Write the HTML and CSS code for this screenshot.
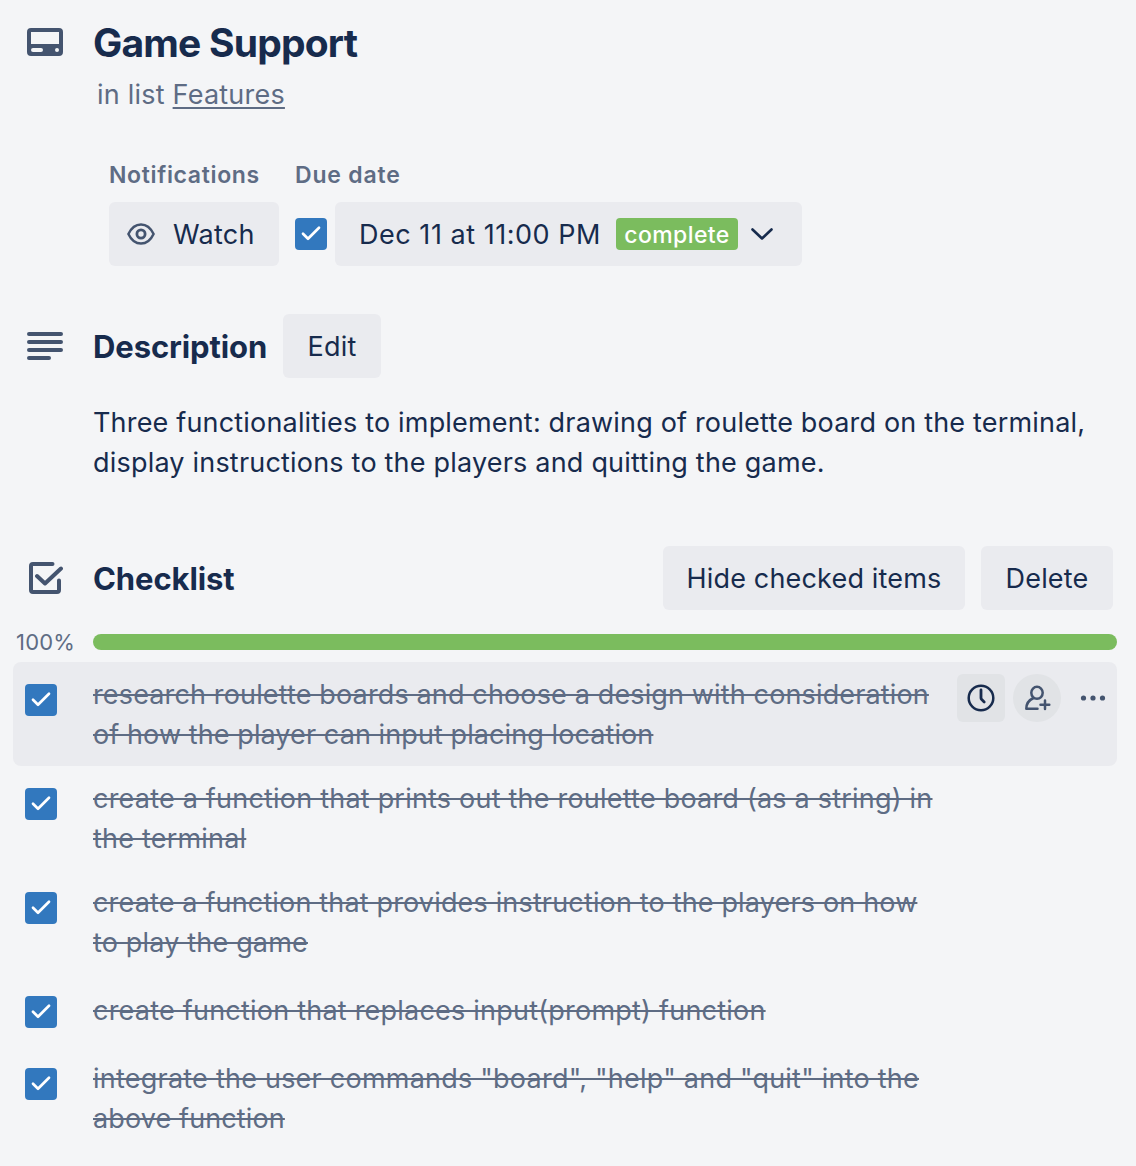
FILE: index.html
```html
<!DOCTYPE html>
<html lang="en">
<head>
<meta charset="utf-8">
<title>Game Support</title>
<link rel="stylesheet" href="styles.css">
</head>
<body>
<svg class="defs" aria-hidden="true">
  <symbol id="tick" viewBox="0 0 32 32"><path d="M8 15.800l5 5L24 9.800" fill="none" stroke="#fff" stroke-width="2.700" stroke-linecap="round" stroke-linejoin="round"/></symbol>
</svg>
<main class="card">
  <header class="head">
    <svg class="icon icon-card" width="36" height="28" viewBox="0 0 36 28"><path fill="#44546f" fill-rule="evenodd" d="M4 0h28a4 4 0 0 1 4 4v20a4 4 0 0 1-4 4H4a4 4 0 0 1-4-4V4a4 4 0 0 1 4-4zM4 4v12h28V4zM6 20a2 2 0 0 0 0 4h8a2 2 0 0 0 0-4zM30 20a2 2 0 1 0 0 4 2 2 0 0 0 0-4z"/></svg>
    <div>
      <h1 class="title">Game Support</h1>
      <p class="sub">in list <a class="link">Features</a></p>
    </div>
  </header>

  <section class="meta">
    <div>
      <h3 class="label label-notif">Notifications</h3>
      <button class="btn watch"><svg width="28" height="24" viewBox="0 0 28 24" fill="none" stroke="#44546f"><path d="M1.400 12C4 6.500 8.500 2.400 14 2.400S24 6.500 26.600 12C24 17.500 19.500 21.600 14 21.600S4 17.500 1.400 12z" stroke-width="2.500" stroke-linejoin="round"/><circle cx="14" cy="12" r="4.100" stroke-width="2.800"/></svg><span class="t-watch">Watch</span></button>
    </div>
    <div>
      <h3 class="label label-due">Due date</h3>
      <div class="due">
        <span class="check"><svg width="32" height="32"><use href="#tick"/></svg></span>
        <button class="btn date"><span class="t-date">Dec 11 at 11:00 PM</span><span class="badge">complete</span><svg width="24" height="14" viewBox="0 0 24 14"><path d="M2.500 2.500L12 11.500l9.500-9" fill="none" stroke="#172b4d" stroke-width="2.600" stroke-linecap="round" stroke-linejoin="round"/></svg></button>
      </div>
    </div>
  </section>

  <section class="description">
    <div class="bar">
      <svg class="icon" width="36" height="28" viewBox="0 0 36 28" stroke="#44546f" stroke-width="4" stroke-linecap="round"><path d="M2 2h32M2 10h32M2 18h32M2 26h20"/></svg>
      <h2 class="h2 h2-desc">Description</h2>
      <button class="btn edit"><span>Edit</span></button>
    </div>
    <p class="text"><span class="d1">Three functionalities to implement: drawing of roulette board on the terminal,</span><br><span class="d2">display instructions to the players and quitting the game.</span></p>
  </section>

  <section class="checklist">
    <div class="bar">
      <svg class="icon" width="36" height="32" viewBox="0 0 36 32" fill="none" stroke="#44546f" stroke-width="4" stroke-linecap="round" stroke-linejoin="round"><path d="M25.500 2H6a2 2 0 0 0-2 2v24a2 2 0 0 0 2 2h24a2 2 0 0 0 2-2V18.500M10 14l8 7.500L34 6.500"/></svg>
      <h2 class="h2 h2-check">Checklist</h2>
      <div class="actions">
        <button class="btn hide"><span>Hide checked items</span></button>
        <button class="btn delete"><span>Delete</span></button>
      </div>
    </div>
    <div class="progress"><span class="percent">100%</span><div class="track"></div></div>
    <ul class="items">
      <li class="item active">
        <span class="check"><svg width="32" height="32"><use href="#tick"/></svg></span>
        <p class="name"><span class="a1">research roulette boards and choose a design with consideration</span><br><span class="a2">of how the player can input placing location</span></p>
        <div class="tools">
          <span class="tool"><svg width="28" height="28" viewBox="0 0 28 28" fill="none" stroke="#172b4d" stroke-linecap="round" stroke-linejoin="round"><circle cx="14" cy="14" r="12.300" stroke-width="2.500"/><path d="M14 6v8q0 .8.500 1.300l2.700 2.700" stroke-width="2.800"/></svg></span>
          <span class="tool round"><svg width="28" height="28" viewBox="0 0 28 28" fill="none" stroke="#44546f" stroke-width="2.500" stroke-linecap="round" stroke-linejoin="round"><ellipse cx="14" cy="8.800" rx="5.700" ry="6"/><path d="M10.500 14C6 16 3.300 19.500 3.300 24.800H14.500M22 16.500v8.600M17.500 20.800h8.800"/></svg></span>
          <span class="tool plain"><svg width="26" height="6" viewBox="0 0 26 6" fill="#44546f"><circle cx="3.500" cy="3" r="2.600"/><circle cx="13" cy="3" r="2.600"/><circle cx="22.500" cy="3" r="2.600"/></svg></span>
        </div>
      </li>
      <li class="item">
        <span class="check"><svg width="32" height="32"><use href="#tick"/></svg></span>
        <p class="name"><span class="b1">create a function that prints out the roulette board (as a string) in</span><br><span class="b2">the terminal</span></p>
      </li>
      <li class="item">
        <span class="check"><svg width="32" height="32"><use href="#tick"/></svg></span>
        <p class="name"><span class="c1">create a function that provides instruction to the players on how</span><br><span class="c2">to play the game</span></p>
      </li>
      <li class="item single">
        <span class="check"><svg width="32" height="32"><use href="#tick"/></svg></span>
        <p class="name"><span class="e1">create function that replaces input(prompt) function</span></p>
      </li>
      <li class="item">
        <span class="check"><svg width="32" height="32"><use href="#tick"/></svg></span>
        <p class="name"><span class="f1">integrate the user commands "board", "help" and "quit" into the</span><br><span class="f2">above function</span></p>
      </li>
    </ul>
  </section>
</main>
</body>
</html>
```
FILE: styles.css
```css
* { box-sizing: border-box; margin: 0; padding: 0; }
body {
  background: #f4f5f7;
  color: #172b4d;
  font: 27px/40px Inter, "Liberation Sans", sans-serif;
  white-space: nowrap;
}
.defs { display: none; }
svg { display: block; flex: none; }
.card { height: 1166px; padding: 16px 19px 0 13px; overflow: hidden; }
.icon { width: 36px; }

.head { display: grid; grid-template-columns: 66px 1fr; padding-left: 14px; }
.icon-card { margin-top: 12px; }
.title { font-size: 39px; line-height: 54px; font-weight: 700; letter-spacing: -0.8px; }
.sub { margin: 5px 0 0 4px; color: #5e6c84; letter-spacing: 0.22px; }
.link { text-decoration: underline; text-decoration-thickness: 2px; text-underline-offset: 3px; }

.meta { display: flex; gap: 16px; margin: 40px 0 0 96px; }
.label { width: 170px; color: #5e6c84; font-size: 23px; font-weight: 600; margin-bottom: 7px; }
.label-notif { letter-spacing: 0.65px; }
.label-due { letter-spacing: 0.8px; }
.btn {
  display: flex;
  align-items: center;
  justify-content: center;
  height: 64px;
  border: 0;
  border-radius: 6px;
  background: #eaebef;
  color: inherit;
  font: inherit;
  letter-spacing: 0.17px;
}
.btn > span:not(.badge) { padding-top: 2px; }
.watch { width: 170px; justify-content: flex-start; padding-left: 18px; gap: 18px; }
.t-watch { letter-spacing: 0.3px; }
.due { display: flex; align-items: center; gap: 8px; }
.date { width: 467px; justify-content: flex-start; padding-left: 24px; }
.t-date { width: 257px; text-align: left; letter-spacing: 0.53px; }
.badge {
  width: 122px;
  height: 32px;
  margin-right: 12px;
  border-radius: 4px;
  background: #7bbc5e;
  color: #fff;
  font-size: 23px;
  line-height: 34px;
  font-weight: 500;
  letter-spacing: 0.4px;
  text-align: center;
}
.check { width: 32px; height: 32px; border-radius: 4px; background: #3278be; flex: none; }

.description { margin-top: 48px; }
.bar { display: flex; align-items: center; height: 64px; padding-left: 14px; }
.h2 { margin-left: 30px; padding-top: 2px; font-size: 31px; font-weight: 700; letter-spacing: -0.1px; }
.edit { width: 98px; margin-left: 16px; }
.h2-desc { width: 174px; }
.text { margin: 25px 0 0 80px; }
.d1 { letter-spacing: 0.18px; }
.d2 { letter-spacing: 0.2px; }

.checklist { margin-top: 63px; }
.actions { display: flex; gap: 16px; margin-left: auto; padding-right: 4px; }
.hide { width: 302px; }
.delete { width: 132px; }
.progress { display: flex; align-items: center; height: 32px; margin: 16px 0 4px; }
.percent { width: 80px; padding-left: 3px; color: #5e6c84; font-size: 22px; letter-spacing: 0.2px; }
.track { flex: 1; height: 16px; border-radius: 8px; background: #7bbc5e; }
.items { list-style: none; }
.item { display: flex; height: 104px; padding: 12px; border-radius: 8px; }
.item.active { background: #eaebef; }
.item .check { margin-top: 10px; }
.name { width: 864px; flex: none; padding: 1px 0 0 36px; color: #5e6c84; text-decoration: line-through; text-decoration-thickness: 2px; }
.item.single { height: 72px; }
.single .name { padding-top: 5px; }
.a1 { letter-spacing: 0.14px; }
.a2 { letter-spacing: 0.09px; }
.b1 { letter-spacing: 0.21px; }
.b2 { letter-spacing: 0.2px; }
.c1 { letter-spacing: 0.16px; }
.c2 { letter-spacing: 0.17px; }
.e1 { letter-spacing: 0.22px; }
.f1 { letter-spacing: 0.23px; }
.f2 { letter-spacing: 0.12px; }
.tools { display: flex; gap: 8px; margin-left: 36px; }
.tool { display: flex; align-items: center; justify-content: center; width: 48px; height: 48px; border-radius: 6px; background: #e1e3e6; }
.tool.round { border-radius: 50%; }
.tool.plain { background: none; }
```
